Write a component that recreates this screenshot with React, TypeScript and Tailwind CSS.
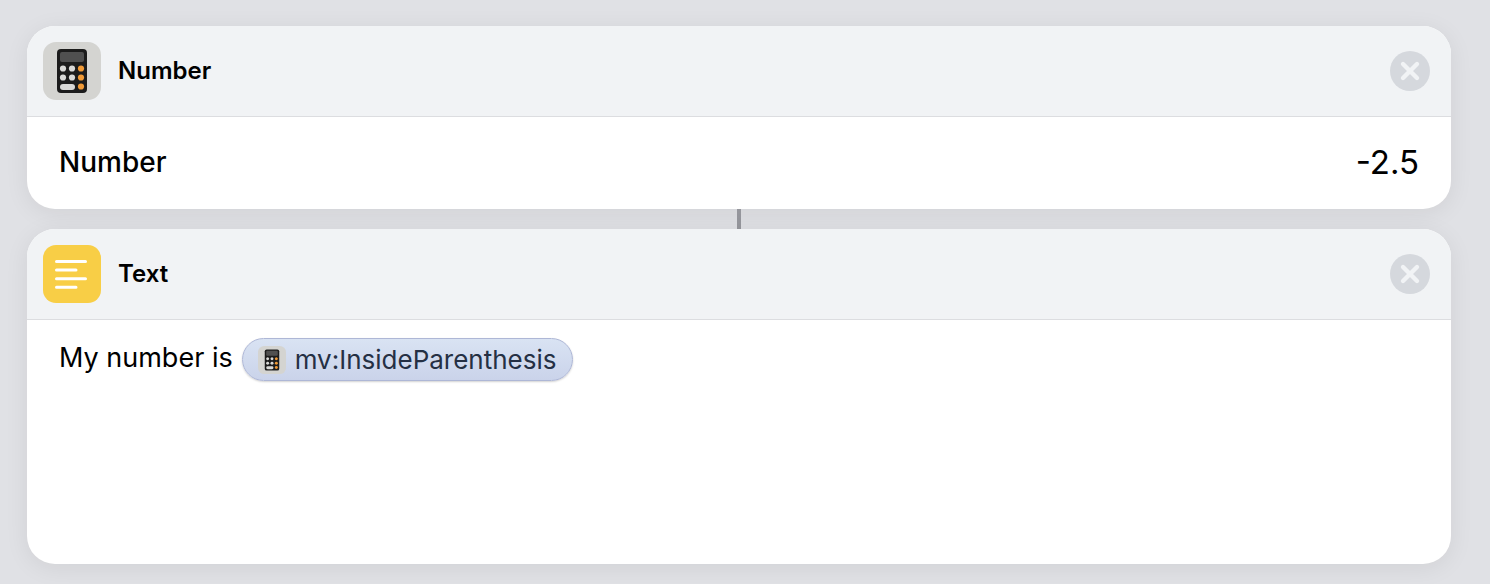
import { useState } from "react";
import type { ReactNode } from "react";

function CalculatorIcon({ className }: { className: string }) {
  return (
    <svg viewBox="0 0 58 58" className={className} aria-hidden="true">
      <rect width="58" height="58" rx="13" fill="#d4d4d1" />
      <rect x="14" y="7" width="30" height="44" rx="4" fill="#1c1c1c" />
      <rect x="17" y="10" width="24" height="10" rx="2" fill="#505050" />
      {[26.5, 35.5].map((cy) => (
        <g key={cy}>
          <circle cx="20" cy={cy} r="3.1" fill="#d9d9d7" />
          <circle cx="29" cy={cy} r="3.1" fill="#d9d9d7" />
          <circle cx="38" cy={cy} r="3.1" fill="#f09a37" />
        </g>
      ))}
      <rect x="17" y="42" width="15" height="6" rx="3" fill="#d9d9d7" />
      <circle cx="38" cy="44.5" r="3.1" fill="#f09a37" />
    </svg>
  );
}

function TextIcon({ className }: { className: string }) {
  return (
    <svg viewBox="0 0 58 58" className={className} aria-hidden="true">
      <rect width="58" height="58" rx="13" fill="#f8ce46" />
      <path
        d="M13.5 16.5h29M13.5 25.1h19.5M13.5 33.7h29M13.5 42.3h19.5"
        stroke="#fff"
        strokeWidth="3"
        strokeLinecap="round"
      />
    </svg>
  );
}

function ActionCard({
  title,
  icon,
  children,
}: {
  title: string;
  icon: ReactNode;
  children: ReactNode;
}) {
  return (
    <section className="w-full overflow-hidden rounded-[28px] bg-white shadow-[0_4px_24px_rgba(0,0,0,0.07)]">
      <header className="flex items-center gap-[17px] border-b border-[#dcdde0] bg-[#f1f3f5] py-4 pr-[21px] pl-4">
        {icon}
        <h2 className="flex-1 text-2xl font-semibold">{title}</h2>
        <button type="button" aria-label={`Remove ${title}`} className="size-10 rounded-full bg-[#d5d8dd]">
          <svg viewBox="0 0 40 40" className="size-10" aria-hidden="true">
            <path d="M13 13l14 14M27 13L13 27" stroke="#f1f3f5" strokeWidth="4.4" strokeLinecap="round" />
          </svg>
        </button>
      </header>
      {children}
    </section>
  );
}

export default function App() {
  const [value, setValue] = useState("-2.5");

  return (
    <main className="flex min-h-screen flex-col items-center bg-[#e0e1e5] pt-[26px] pr-[39px] pb-5 pl-[27px] font-['Inter',sans-serif] text-black">
      <ActionCard title="Number" icon={<CalculatorIcon className="size-[58px]" />}>
        <div className="flex items-center justify-between px-8 pt-[23px] pb-[25px]">
          <label htmlFor="number-value" className="text-[28px] leading-[44px] font-medium">
            Number
          </label>
          <input
            id="number-value"
            type="text"
            inputMode="decimal"
            value={value}
            onChange={(event) => setValue(event.target.value)}
            className="w-48 bg-transparent text-right text-[33px] leading-[44px] outline-none"
          />
        </div>
      </ActionCard>
      <div className="h-5 w-1 bg-[#95969c]" />
      <ActionCard title="Text" icon={<TextIcon className="size-[58px]" />}>
        <div
          role="textbox"
          aria-label="Text"
          aria-multiline="true"
          contentEditable
          suppressContentEditableWarning
          className="flex min-h-61 items-start gap-[9px] px-8 pt-4 text-[27px] leading-[44px] outline-none"
        >
          <span>My number is</span>
          <span
            contentEditable={false}
            suppressContentEditableWarning
            className="mt-[2px] flex h-[43px] items-center gap-[9px] rounded-full border border-[#aeb7d6] bg-linear-to-b from-[#d9e3f3] to-[#cad3ea] pr-[15px] pl-[15px] text-[26px] text-[#253044] shadow-[0_1px_2px_rgba(0,0,0,0.18)]"
          >
            <CalculatorIcon className="size-7" />
            <span>mv:InsideParenthesis</span>
          </span>
        </div>
      </ActionCard>
    </main>
  );
}
